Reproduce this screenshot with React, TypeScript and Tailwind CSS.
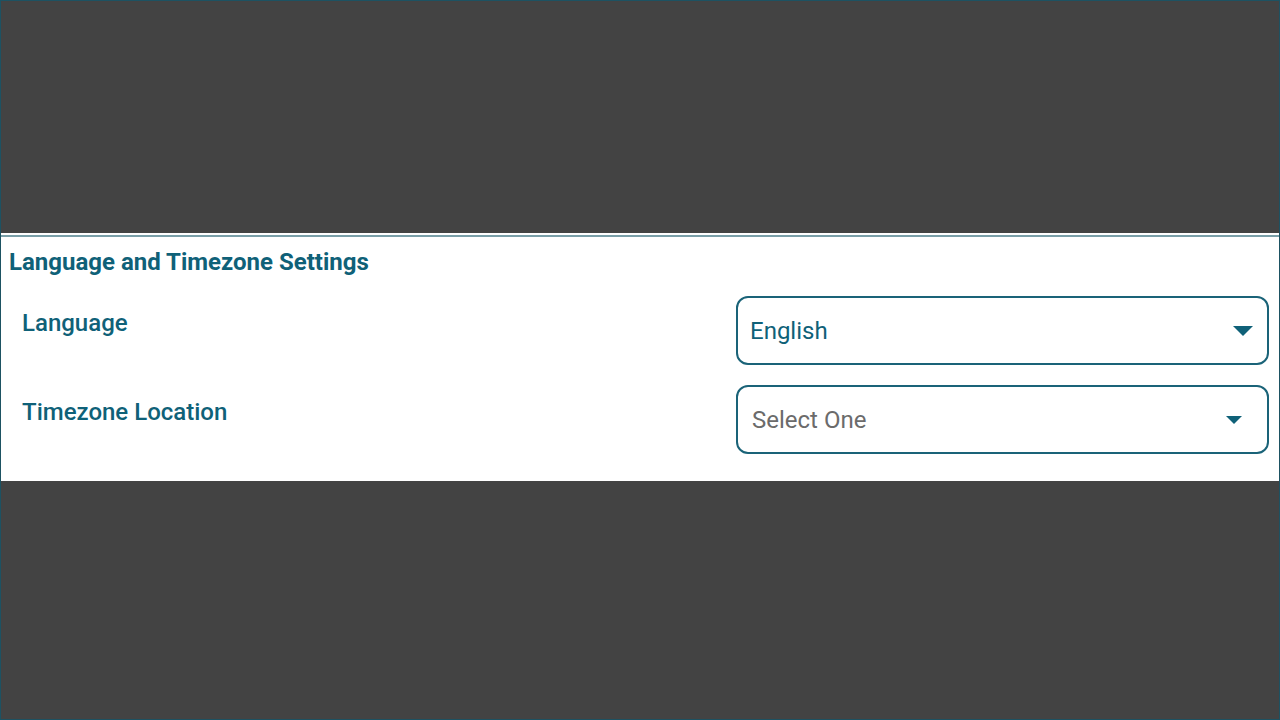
const Caret = ({ size }: { size: "lg" | "sm" }) => (
  <svg
    viewBox="0 0 20 10"
    className={size === "lg" ? "w-[20px] h-[10px]" : "w-[16px] h-[8px]"}
    fill="#0f6178"
  >
    <path d="M0 0 L20 0 L10 10 Z" />
  </svg>
);

const rows = [
  { label: "Language", value: "English", placeholder: false },
  { label: "Timezone Location", value: "Select One", placeholder: true },
];

export default function App() {
  return (
    <div
      className="h-[720px] w-full bg-[#434343] border border-[#1d5262] flex flex-col"
      style={{ fontFamily: "Roboto, 'Liberation Sans', sans-serif" }}
    >
      <div className="h-[232px]" />
      <div className="bg-white h-[248px] pt-[2px]">
        <div className="border-t-2 border-[#7a9fa8] pl-[8px] pr-[10px] pt-[11px]">
          <h2 className="text-[24px] leading-[28px] font-bold text-[#0f6178]">
            Language and Timezone Settings
          </h2>
          <div className="flex flex-col gap-[20px] mt-[20px]">
            {rows.map((r) => (
              <div key={r.label} className="flex items-start">
                <div className="flex-1 pl-[13px] pt-[13px] text-[24px] leading-[28px] font-medium text-[#0f6178]">
                  {r.label}
                </div>
                <div className="w-[533px] h-[69px] border-2 border-[#1a6378] rounded-[12px] flex items-center justify-between pl-[12px] pr-[14px]">
                  <span
                    className={
                      r.placeholder
                        ? "text-[24px] text-[#6b6b6b] pl-[2px]"
                        : "text-[24px] text-[#0f6178]"
                    }
                  >
                    {r.value}
                  </span>
                  <span className={r.placeholder ? "pr-[11px]" : ""}>
                    <Caret size={r.placeholder ? "sm" : "lg"} />
                  </span>
                </div>
              </div>
            ))}
          </div>
        </div>
      </div>
    </div>
  );
}
